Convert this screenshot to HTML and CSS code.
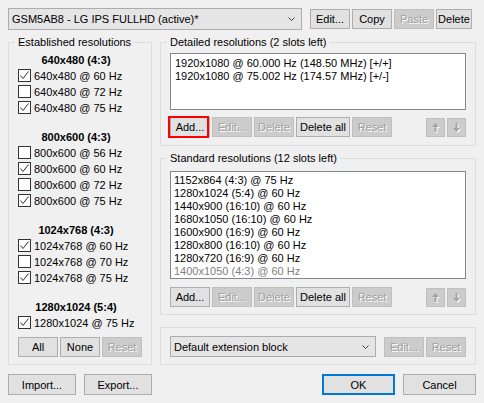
FILE: index.html
```html
<!DOCTYPE html>
<html>
<head>
<meta charset="utf-8">
<link rel="stylesheet" href="styles.css">
</head>
<body>
<div class="window">
  <div class="toprow">
    <div class="combo combo-monitor">
      <span class="combo-text">GSM5AB8 - LG IPS FULLHD (active)*</span>
      <svg class="chev" viewBox="0 0 7 4"><polyline points="0.5,0.5 3.5,3.5 6.5,0.5" fill="none" stroke="#444" stroke-width="1"/></svg>
    </div>
    <div class="btnrow top-btns">
      <button class="btn">Edit...</button>
      <button class="btn">Copy</button>
      <button class="btn" disabled>Paste</button>
      <button class="btn w36">Delete</button>
    </div>
  </div>

  <div class="main">
    <fieldset class="group group-est">
      <legend>Established resolutions</legend>
      <div class="est-section">
        <div class="est-head">640x480 (4:3)</div>
        <div class="cb-row"><span class="cb"><svg viewBox="0 0 11 11"><polyline points="1.5,5.5 4,8.5 9.5,1.5" fill="none" stroke="#333" stroke-width="1"/></svg></span>640x480 @ 60 Hz</div>
        <div class="cb-row"><span class="cb"></span>640x480 @ 72 Hz</div>
        <div class="cb-row"><span class="cb"><svg viewBox="0 0 11 11"><polyline points="1.5,5.5 4,8.5 9.5,1.5" fill="none" stroke="#333" stroke-width="1"/></svg></span>640x480 @ 75 Hz</div>
      </div>
      <div class="est-section">
        <div class="est-head">800x600 (4:3)</div>
        <div class="cb-row"><span class="cb"></span>800x600 @ 56 Hz</div>
        <div class="cb-row"><span class="cb"><svg viewBox="0 0 11 11"><polyline points="1.5,5.5 4,8.5 9.5,1.5" fill="none" stroke="#333" stroke-width="1"/></svg></span>800x600 @ 60 Hz</div>
        <div class="cb-row"><span class="cb"></span>800x600 @ 72 Hz</div>
        <div class="cb-row"><span class="cb"><svg viewBox="0 0 11 11"><polyline points="1.5,5.5 4,8.5 9.5,1.5" fill="none" stroke="#333" stroke-width="1"/></svg></span>800x600 @ 75 Hz</div>
      </div>
      <div class="est-section">
        <div class="est-head">1024x768 (4:3)</div>
        <div class="cb-row"><span class="cb"><svg viewBox="0 0 11 11"><polyline points="1.5,5.5 4,8.5 9.5,1.5" fill="none" stroke="#333" stroke-width="1"/></svg></span>1024x768 @ 60 Hz</div>
        <div class="cb-row"><span class="cb"></span>1024x768 @ 70 Hz</div>
        <div class="cb-row"><span class="cb"><svg viewBox="0 0 11 11"><polyline points="1.5,5.5 4,8.5 9.5,1.5" fill="none" stroke="#333" stroke-width="1"/></svg></span>1024x768 @ 75 Hz</div>
      </div>
      <div class="est-section">
        <div class="est-head">1280x1024 (5:4)</div>
        <div class="cb-row"><span class="cb"><svg viewBox="0 0 11 11"><polyline points="1.5,5.5 4,8.5 9.5,1.5" fill="none" stroke="#333" stroke-width="1"/></svg></span>1280x1024 @ 75 Hz</div>
      </div>
      <div class="btnrow est-btns">
        <button class="btn">All</button>
        <button class="btn">None</button>
        <button class="btn" disabled>Reset</button>
      </div>
    </fieldset>

    <div class="rightcol">
      <fieldset class="group group-det">
        <legend>Detailed resolutions (2 slots left)</legend>
        <div class="listbox list-det">
          <div>1920x1080 @ 60.000 Hz (148.50 MHz) [+/+]</div>
          <div>1920x1080 @ 75.002 Hz (174.57 MHz) [+/-]</div>
        </div>
        <div class="btnrow list-btns">
          <button class="btn hl">Add...</button>
          <button class="btn" disabled>Edit...</button>
          <button class="btn" disabled>Delete</button>
          <button class="btn w54">Delete all</button>
          <button class="btn" disabled>Reset</button>
          <button class="btn arrowbtn first-arrow" disabled><svg viewBox="0 0 7 9"><polygon points="3.5,0 7,4 4.5,4 4.5,9 2.5,9 2.5,4 0,4" fill="#a3a3a3"/></svg></button>
          <button class="btn arrowbtn" disabled><svg viewBox="0 0 7 9"><polygon points="3.5,9 7,5 4.5,5 4.5,0 2.5,0 2.5,5 0,5" fill="#a3a3a3"/></svg></button>
        </div>
      </fieldset>

      <fieldset class="group group-std">
        <legend>Standard resolutions (12 slots left)</legend>
        <div class="listbox list-std">
          <div>1152x864 (4:3) @ 75 Hz</div>
          <div>1280x1024 (5:4) @ 60 Hz</div>
          <div>1440x900 (16:10) @ 60 Hz</div>
          <div>1680x1050 (16:10) @ 60 Hz</div>
          <div>1600x900 (16:9) @ 60 Hz</div>
          <div>1280x800 (16:10) @ 60 Hz</div>
          <div>1280x720 (16:9) @ 60 Hz</div>
          <div class="dim">1400x1050 (4:3) @ 60 Hz</div>
        </div>
        <div class="btnrow list-btns">
          <button class="btn">Add...</button>
          <button class="btn" disabled>Edit...</button>
          <button class="btn" disabled>Delete</button>
          <button class="btn w54">Delete all</button>
          <button class="btn" disabled>Reset</button>
          <button class="btn arrowbtn first-arrow" disabled><svg viewBox="0 0 7 9"><polygon points="3.5,0 7,4 4.5,4 4.5,9 2.5,9 2.5,4 0,4" fill="#a3a3a3"/></svg></button>
          <button class="btn arrowbtn" disabled><svg viewBox="0 0 7 9"><polygon points="3.5,9 7,5 4.5,5 4.5,0 2.5,0 2.5,5 0,5" fill="#a3a3a3"/></svg></button>
        </div>
      </fieldset>

      <fieldset class="group group-ext">
        <div class="ext-row">
          <div class="combo combo-ext">
            <span class="combo-text">Default extension block</span>
            <svg class="chev" viewBox="0 0 7 4"><polyline points="0.5,0.5 3.5,3.5 6.5,0.5" fill="none" stroke="#444" stroke-width="1"/></svg>
          </div>
          <div class="btnrow ext-btns">
            <button class="btn" disabled>Edit...</button>
            <button class="btn" disabled>Reset</button>
          </div>
        </div>
      </fieldset>
    </div>
  </div>

  <div class="bottomrow">
    <div class="btnrow gap8">
      <button class="btn big68">Import...</button>
      <button class="btn big68">Export...</button>
    </div>
    <div class="btnrow gap8">
      <button class="btn big73 default">OK</button>
      <button class="btn big73">Cancel</button>
    </div>
  </div>
</div>
</body>
</html>
```

FILE: styles.css
```css
html, body {
  margin: 0;
  padding: 0;
}
body {
  background: #f0f0f0;
  font-family: "Liberation Sans", Arial, sans-serif;
  font-size: 11px;
  color: #000;
  width: 484px;
  height: 403px;
  overflow: hidden;
}
.window {
  box-sizing: border-box;
  width: 484px;
  padding: 8px;
}

/* top row */
.toprow {
  display: flex;
  align-items: center;
  height: 22px;
}
.combo {
  box-sizing: border-box;
  display: flex;
  align-items: center;
  background: #e5e5e5;
  border: 1px solid #adadad;
  padding: 0 6px 0 3px;
}
.combo-monitor {
  width: 294px;
  height: 22px;
}
.combo-text {
  flex: 1;
  white-space: nowrap;
}
.chev {
  width: 7px;
  height: 4px;
  display: block;
}
.btnrow {
  display: flex;
  gap: 2px;
}
.top-btns {
  margin-left: 8px;
}

/* buttons */
.btn {
  box-sizing: border-box;
  width: 40px;
  height: 20px;
  margin: 0;
  padding: 0;
  font: inherit;
  color: #000;
  background: #e1e1e1;
  border: 1px solid #adadad;
  border-radius: 0;
  white-space: nowrap;
  text-align: center;
}
.btn:disabled {
  background: #cccccc;
  border-color: #bfbfbf;
  color: #a0a0a0;
  text-shadow: 1px 1px 0 #ffffff;
}
.w36 { width: 36px; }
.w54 { width: 54px; }
.hl {
  position: relative;
}
.hl::after {
  content: "";
  position: absolute;
  left: -3px;
  top: -2px;
  right: 0;
  bottom: -2px;
  border: 2px solid #ff0000;
}
.arrowbtn {
  width: 19px;
  height: 19px;
  display: flex;
  align-items: center;
  justify-content: center;
}
.arrowbtn svg {
  width: 7px;
  height: 9px;
  display: block;
  filter: drop-shadow(1px 1px 0 #ffffff);
}
.first-arrow {
  margin-left: auto;
}

/* main area */
.main {
  display: flex;
  gap: 8px;
  margin-top: 4px;
}
.group {
  box-sizing: border-box;
  margin: 0;
  min-width: 0;
  border: 1px solid #dcdcdc;
  padding: 3px 9px 7px 9px;
}
.group legend {
  padding: 0 3px;
  margin-left: -3px;
  line-height: 16px;
  height: 16px;
}

/* established */
.group-est {
  width: 144px;
  flex: none;
}
.est-section + .est-section {
  margin-top: 14px;
}
.est-head {
  font-weight: bold;
  line-height: 15px;
  height: 15px;
  text-align: center;
  padding-right: 8px;
}
.cb-row {
  display: flex;
  align-items: center;
  height: 16px;
  white-space: nowrap;
}
.cb {
  box-sizing: border-box;
  width: 13px;
  height: 13px;
  border: 1px solid #333333;
  background: #ffffff;
  margin-right: 3px;
  margin-bottom: 2px;
  flex: none;
}
.cb svg {
  width: 11px;
  height: 11px;
  display: block;
}
.est-btns {
  margin-top: 6px;
}

/* right column */
.rightcol {
  width: 316px;
  display: flex;
  flex-direction: column;
}
.listbox {
  box-sizing: border-box;
  background: #ffffff;
  border: 1px solid #828790;
  padding: 3px 3px;
  line-height: 13px;
  white-space: nowrap;
  overflow: hidden;
}
.group-det {
  padding: 3px 9px 8px 9px;
  margin-bottom: 4px;
}
.list-det {
  height: 57px;
  padding-left: 4px;
}
.group-det .list-btns {
  margin-top: 7px;
}
.list-btns {
  align-items: flex-end;
  height: 20px;
}
.group-std {
  padding: 5px 9px 7px 9px;
}
.list-std {
  height: 108px;
  padding-top: 2px;
}
.dim {
  color: #808080;
}
.group-std .list-btns {
  margin-top: 8px;
}
.group-ext {
  margin-top: 12px;
  padding: 8px 9px 7px 9px;
}
.ext-row {
  display: flex;
  align-items: center;
  height: 21px;
}
.combo-ext {
  width: 206px;
  height: 21px;
}
.ext-btns {
  margin-left: 8px;
}

/* bottom row */
.bottomrow {
  display: flex;
  justify-content: space-between;
  margin-top: 9px;
}
.gap8 {
  gap: 8px;
}
.big68 {
  width: 68px;
  height: 21px;
}
.big73 {
  width: 73px;
  height: 21px;
}
.default {
  border-color: #0078d7;
  box-shadow: inset 0 0 0 1px #0078d7;
}
```
